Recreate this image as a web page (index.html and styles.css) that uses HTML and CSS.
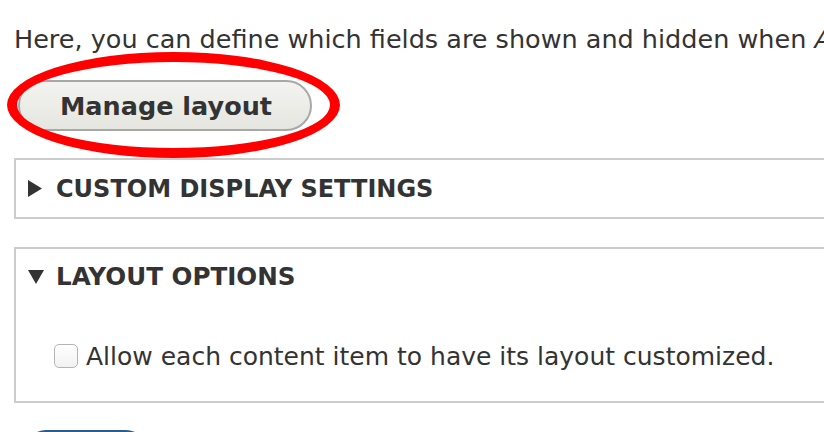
FILE: index.html
```html
<!DOCTYPE html>
<html>
<head>
<meta charset="utf-8">
<link rel="stylesheet" href="styles.css">
</head>
<body>
<div class="page">
  <p class="intro">Here, you can define which fields are shown and hidden when <em>Article</em> content is displayed.</p>
  <div class="manage-wrap">
    <button class="btn-manage">Manage layout</button>
    <span class="highlight"></span>
  </div>
  <div class="fieldset collapsed">
    <div class="legend"><svg class="tri" width="14" height="17" viewBox="0 0 14 17"><polygon points="0,0 14,8.5 0,17" fill="#333"/></svg><span class="legend-text narrow">CUSTOM DISPLAY SETTINGS</span></div>
  </div>
  <div class="fieldset open">
    <div class="legend"><svg class="tri down" width="16" height="14" viewBox="0 0 16 14"><polygon points="0,0 16,0 8,14" fill="#333"/></svg><span class="legend-text">LAYOUT OPTIONS</span></div>
    <label class="check-row"><span class="checkbox"></span>Allow each content item to have its layout customized.</label>
  </div>
  <div class="actions"><button class="btn-save">Save</button></div>
</div>
</body>
</html>
```
FILE: styles.css
```css
html, body {
  margin: 0;
  padding: 0;
  background: #fff;
  overflow: hidden;
  width: 824px;
  height: 432px;
}
.page {
  padding: 0 0 0 14px;
  font-family: "DejaVu Sans", "Lucida Grande", Verdana, sans-serif;
  color: #333;
  font-size: 25px;
}
.intro {
  margin: 0;
  padding-top: 24px;
  white-space: nowrap;
  line-height: 30px;
  font-size: 25.5px;
}
.intro em { font-style: italic; }
.manage-wrap {
  position: relative;
  margin: 26px 0 0 4px;
  height: 51px;
  width: 294px;
}
.btn-manage {
  display: block;
  width: 294px;
  height: 51px;
  border: 2px solid #a8a8a8;
  border-radius: 26px;
  background: linear-gradient(#f3f3ef, #e6e6e1);
  font-family: inherit;
  font-weight: bold;
  font-size: 25.5px;
  color: #333;
  padding: 0 0 0 2px;
  text-align: center;
}
.highlight {
  position: absolute;
  left: -11px;
  top: -28px;
  width: 313px;
  height: 86px;
  border: 10px solid #f00;
  border-radius: 50%;
  pointer-events: none;
}
.fieldset {
  border: 2px solid #ccc;
  border-right: none;
  margin-right: -20px;
  box-sizing: border-box;
}
.collapsed {
  margin-top: 27px;
  height: 61px;
}
.open {
  margin-top: 28px;
  height: 156px;
}
.legend {
  display: flex;
  align-items: center;
  font-weight: bold;
  font-size: 24.6px;
  color: #333;
  height: 57px;
  padding-left: 12px;
}
.legend-text.narrow {
  font-size: 24px;
}
.open .legend {
  height: 55px;
}
.tri {
  flex: none;
  margin-right: 14px;
}
.tri.down {
  margin-right: 12px;
}
.check-row {
  display: flex;
  align-items: center;
  height: 30px;
  margin-top: 37px;
  padding-left: 38px;
  font-size: 25px;
  color: #333;
}
.checkbox {
  width: 22px;
  height: 22px;
  border: 1px solid #b4b4b4;
  border-radius: 5px;
  background: linear-gradient(#fff, #f2f2f2);
  margin-right: 8px;
  flex: none;
}
.actions {
  margin-top: 27px;
  padding-left: 10px;
}
.btn-save {
  width: 124px;
  height: 44px;
  border: none;
  border-radius: 22px;
  background: #2a5c8f;
  color: #fff;
  font-family: inherit;
  font-weight: bold;
  font-size: 25px;
}
```
